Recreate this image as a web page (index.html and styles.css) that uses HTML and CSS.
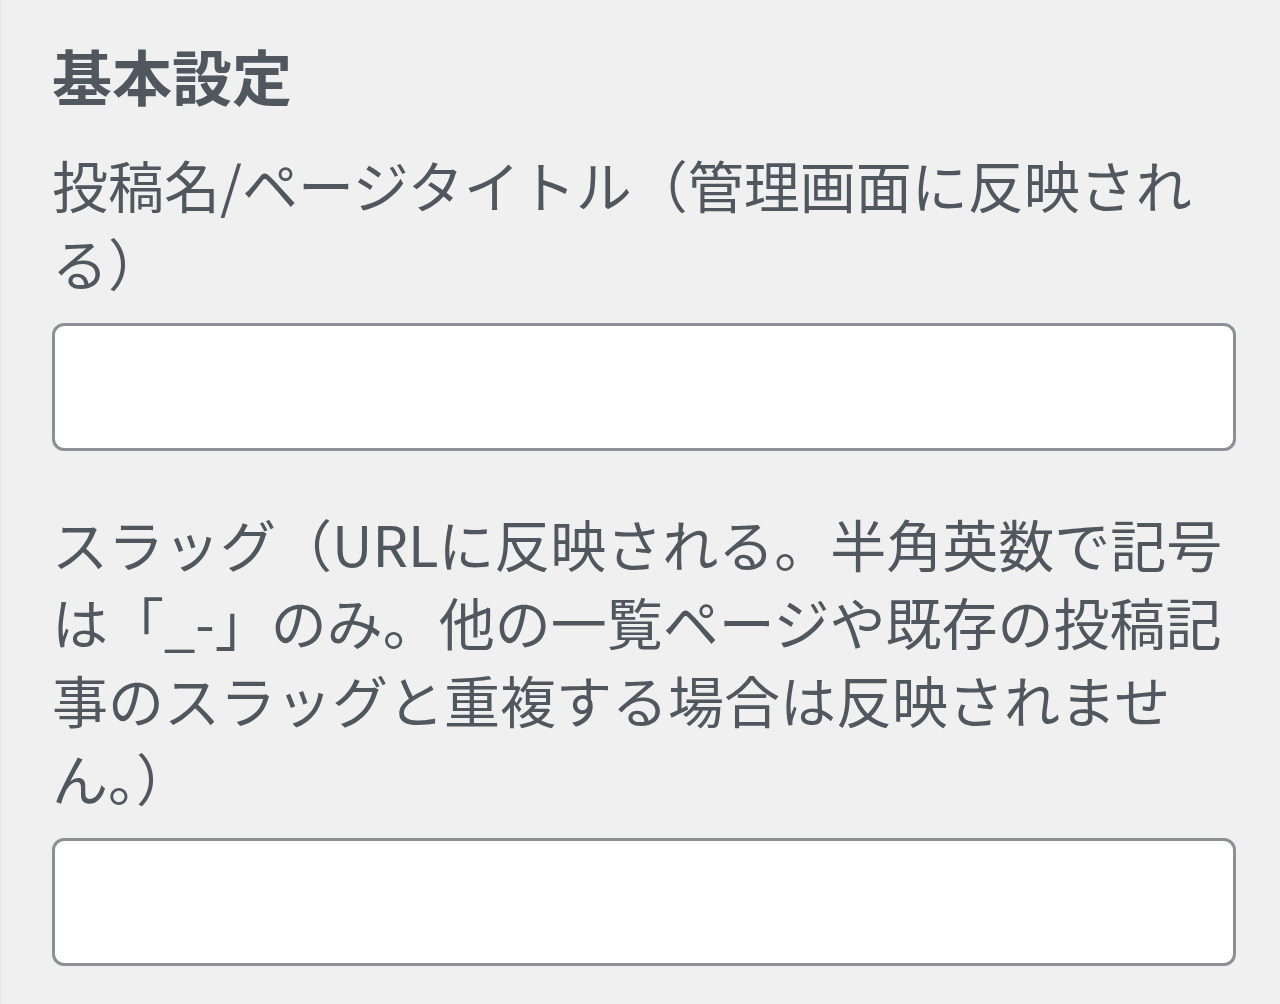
FILE: index.html
```html
<!DOCTYPE html>
<html lang="ja">
<head>
    <meta charset="UTF-8">
    <meta name="viewport" content="width=device-width, initial-scale=1.0">
    <title>基本設定</title>
    <link rel="stylesheet" href="styles.css">
</head>
<body>
    <div class="panel">
        <h2 class="panel-title">基本設定</h2>

        <div class="field">
            <label class="field-label" for="post-title">投稿名/ページタイトル（管理画面に反映される）</label>
            <input class="field-input" type="text" id="post-title">
        </div>

        <div class="field">
            <label class="field-label" for="post-slug">スラッグ（URLに反映される。半角英数で記号は「_-」のみ。他の一覧ページや既存の投稿記事のスラッグと重複する場合は反映されません。）</label>
            <input class="field-input" type="text" id="post-slug">
        </div>
    </div>
</body>
</html>
```

FILE: styles.css
```css
body {
    margin: 0;
    background-color: #f0f0f1;
    font-family: "Noto Sans CJK JP", "Noto Sans", sans-serif;
    color: #50575e;
}

.panel {
    box-sizing: border-box;
    min-height: 100vh;
    padding: 37px 44px 0 50px;
    border-left: 2px solid #e9e9ea;
}

.panel-title {
    margin: 0 0 32px;
    font-size: 60px;
    line-height: 76px;
    font-weight: 700;
    color: #50575e;
}

.field {
    margin-bottom: 53px;
}

.field-label {
    display: block;
    font-size: 56px;
    line-height: 78px;
    line-break: strict;
}

.field-input {
    display: block;
    box-sizing: border-box;
    width: 100%;
    height: 128px;
    margin-top: 22px;
    background: #fff;
    border: 3px solid #8c8f94;
    border-radius: 12px;
    font-size: 56px;
}
```
